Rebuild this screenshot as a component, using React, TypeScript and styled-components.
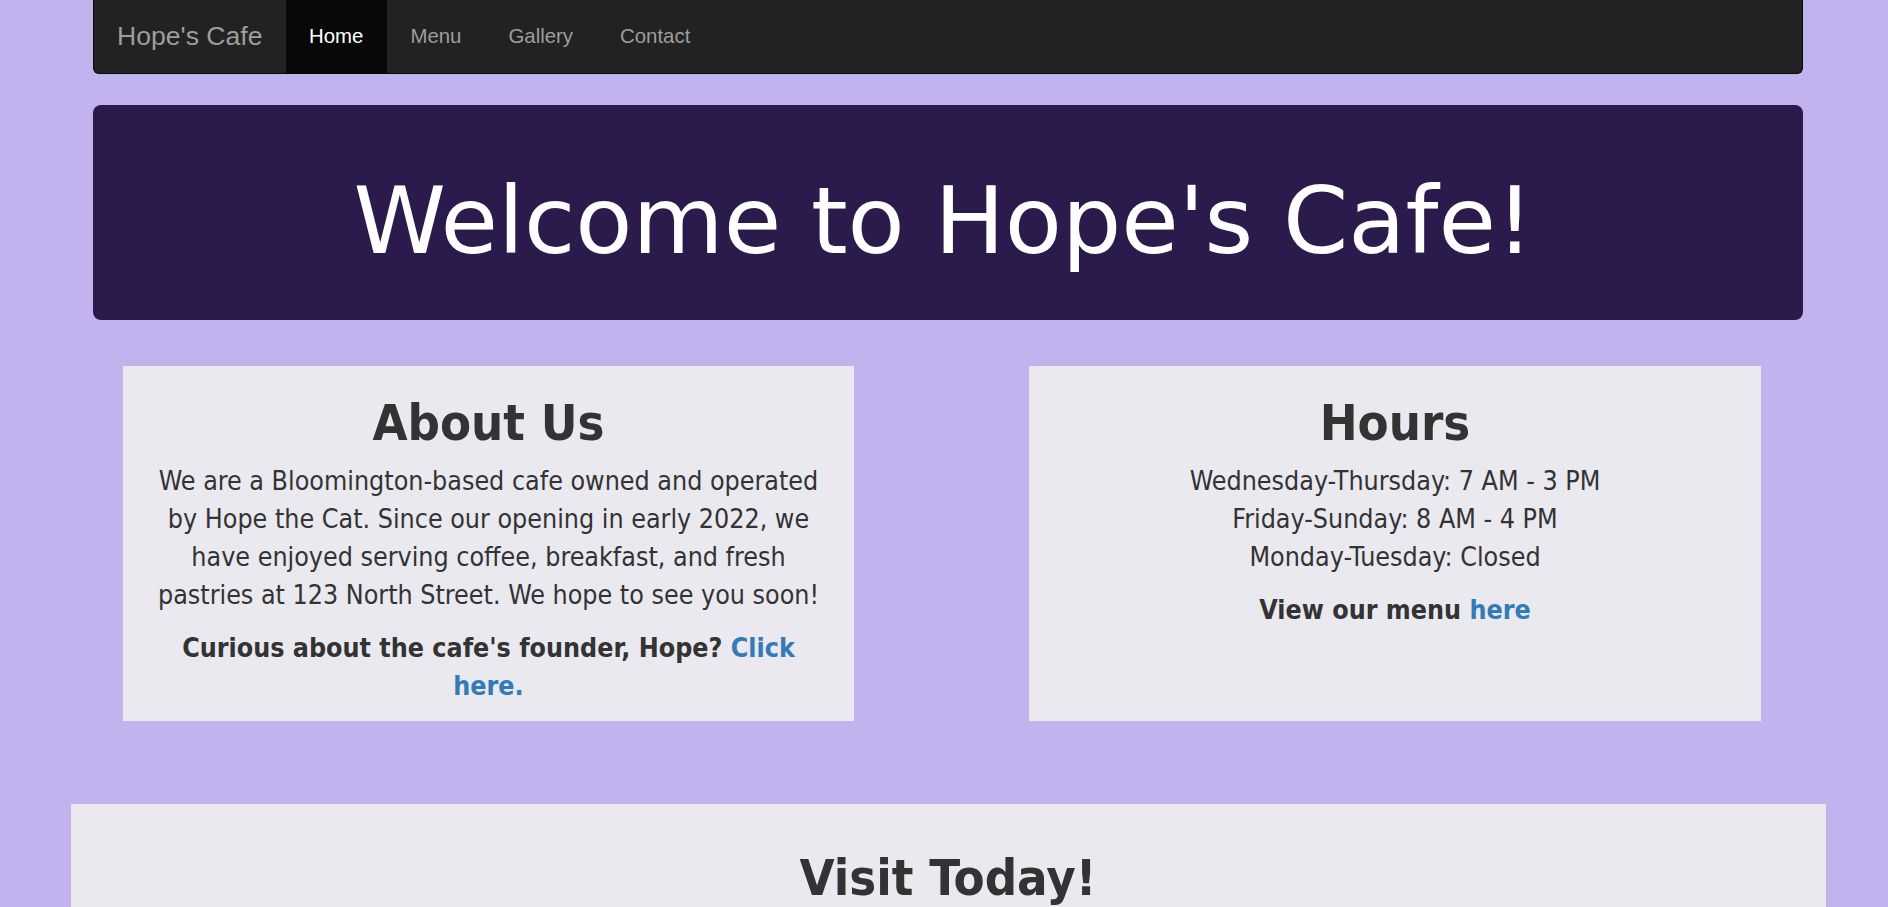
import React from "react";
import styled, { createGlobalStyle } from "styled-components";

const GlobalStyle = createGlobalStyle`
  html, body {
    margin: 0;
    padding: 0;
    background: #c2b2ed;
  }
  body {
    font-family: "DejaVu Sans Condensed", "DejaVu Sans", sans-serif;
    font-stretch: condensed;
    color: #333333;
  }
  * { box-sizing: border-box; }
`;

const Page = styled.div`
  padding-left: 8px;
  min-height: 907px;
  overflow: hidden;
`;

const Container = styled.div`
  width: 1710px;
  margin: 0 auto;
`;

const Navbar = styled.nav`
  display: flex;
  align-items: stretch;
  height: 74px;
  background: #222222;
  border: 1px solid #080808;
  border-top: none;
  border-radius: 0 0 6px 6px;
  margin-bottom: 31px;
  font-family: "Liberation Sans", Arial, sans-serif;
  font-stretch: normal;
`;

const Brand = styled.a`
  display: flex;
  align-items: center;
  padding: 0 23px 1px 23px;
  font-size: 26.6px;
  color: #9d9d9d;
  text-decoration: none;
`;

const NavList = styled.ul`
  display: flex;
  list-style: none;
  margin: 0;
  padding: 0;
`;

const NavLink = styled.a<{ $active?: boolean }>`
  display: flex;
  align-items: center;
  height: 100%;
  padding: 0 23.5px;
  font-size: 20.4px;
  text-decoration: none;
  color: ${(p) => (p.$active ? "#ffffff" : "#9d9d9d")};
  background: ${(p) => (p.$active ? "#080808" : "transparent")};
`;

const Jumbotron = styled.header`
  background: #2b1a4c;
  border-radius: 8px;
  padding: 61px 0 45px;
  text-align: center;
  margin-bottom: 46px;
`;

const HeroTitle = styled.h1`
  margin: 0;
  font-family: "DejaVu Sans", Verdana, sans-serif;
  font-stretch: normal;
  font-weight: 400;
  font-size: 93.5px;
  line-height: 109px;
  color: #ffffff;
  padding-right: 9px;
`;

const CardRow = styled.section`
  display: grid;
  grid-template-columns: 731px 732px;
  justify-content: space-between;
  padding: 0 42px 0 30px;
  margin-bottom: 83px;
`;

const Card = styled.article`
  background: #eae9ef;
  padding: 1px 30px 1px;
  text-align: center;
`;

const Heading = styled.h1`
  font-size: 50.4px;
  line-height: 55px;
  font-weight: 700;
  margin: 28px 0 12px;
`;

const Text = styled.p<{ $bold?: boolean }>`
  font-size: 26.6px;
  line-height: 38px;
  margin: 0 0 15px;
  font-weight: ${(p) => (p.$bold ? 700 : 400)};
`;

const Link = styled.a`
  color: #337ab7;
  text-decoration: none;
`;

const Visit = styled.section`
  width: 1755px;
  margin: 0 auto;
  background: #eae9ef;
  padding: 18px 40px 40px;
  text-align: center;
`;

export default function App() {
  return (
    <>
      <GlobalStyle />
      <Page>
        <Container>
          <Navbar>
            <Brand href="#">Hope's Cafe</Brand>
            <NavList>
              <li>
                <NavLink href="#" $active>
                  Home
                </NavLink>
              </li>
              <li>
                <NavLink href="#">Menu</NavLink>
              </li>
              <li>
                <NavLink href="#">Gallery</NavLink>
              </li>
              <li>
                <NavLink href="#">Contact</NavLink>
              </li>
            </NavList>
          </Navbar>
          <Jumbotron>
            <HeroTitle>Welcome to Hope's Cafe!</HeroTitle>
          </Jumbotron>
          <CardRow>
            <Card>
              <Heading>About Us</Heading>
              <Text>
                We are a Bloomington-based cafe owned and operated by Hope the
                Cat. Since our opening in early 2022, we have enjoyed serving
                coffee, breakfast, and fresh pastries at 123 North Street. We
                hope to see you soon!
              </Text>
              <Text $bold>
                Curious about the cafe's founder, Hope?{" "}
                <Link href="#">Click here.</Link>
              </Text>
            </Card>
            <Card>
              <Heading>Hours</Heading>
              <Text>
                Wednesday-Thursday: 7 AM - 3 PM
                <br />
                Friday-Sunday: 8 AM - 4 PM
                <br />
                Monday-Tuesday: Closed
              </Text>
              <Text $bold>
                View our menu <Link href="#">here</Link>
              </Text>
            </Card>
          </CardRow>
        </Container>
        <Visit>
          <Heading>Visit Today!</Heading>
        </Visit>
      </Page>
    </>
  );
}
